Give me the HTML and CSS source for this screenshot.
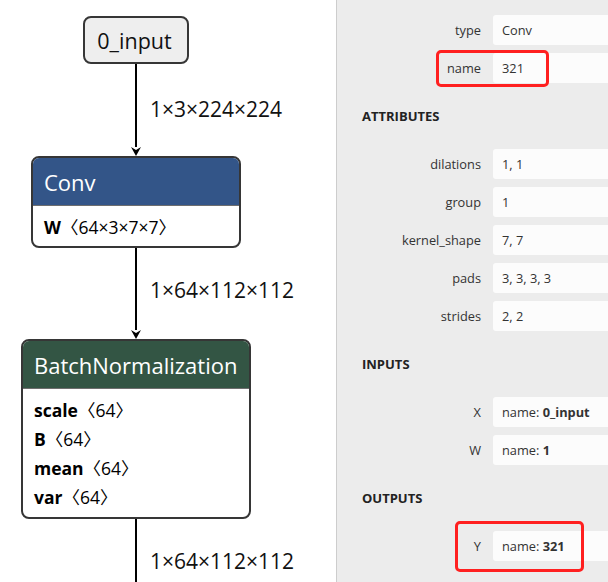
FILE: index.html
```html
<!DOCTYPE html>
<html lang="en">
<head>
<meta charset="utf-8">
<title>Node properties</title>
<link rel="stylesheet" href="styles.css">
</head>
<body>
<div class="app">
  <main class="graph">
    <div class="graph-column">
      <div class="node node--input">0_input</div>

      <div class="edge edge--first">
        <div class="edge-wire">
          <div class="edge-line"></div>
          <svg class="edge-arrow" viewBox="0 0 10 9" width="10" height="9"><polygon points="0,0 5,3 10,0 5,9"/></svg>
        </div>
        <div class="edge-label">1×3×224×224</div>
      </div>

      <div class="node node--op node--conv">
        <div class="node-header node-header--layer">Conv</div>
        <div class="node-body">
          <div class="node-attr"><b>W</b>〈64×3×7×7〉</div>
        </div>
      </div>

      <div class="edge">
        <div class="edge-wire">
          <div class="edge-line"></div>
          <svg class="edge-arrow" viewBox="0 0 10 9" width="10" height="9"><polygon points="0,0 5,3 10,0 5,9"/></svg>
        </div>
        <div class="edge-label">1×64×112×112</div>
      </div>

      <div class="node node--op node--bn">
        <div class="node-header node-header--norm">BatchNormalization</div>
        <div class="node-body">
          <div class="node-attr"><b>scale</b>〈64〉</div>
          <div class="node-attr"><b>B</b>〈64〉</div>
          <div class="node-attr"><b>mean</b>〈64〉</div>
          <div class="node-attr"><b>var</b>〈64〉</div>
        </div>
      </div>

      <div class="edge edge--last">
        <div class="edge-wire">
          <div class="edge-line"></div>
        </div>
        <div class="edge-label">1×64×112×112</div>
      </div>
    </div>
  </main>

  <aside class="sidebar">
    <div class="prop-list">
      <div class="prop"><div class="prop-name">type</div><div class="prop-value">Conv</div></div>
      <div class="prop"><div class="prop-name">name</div><div class="prop-value">321</div><div class="highlight highlight--name"></div></div>
    </div>

    <div class="section-title">Attributes</div>
    <div class="prop-list">
      <div class="prop"><div class="prop-name">dilations</div><div class="prop-value">1, 1</div></div>
      <div class="prop"><div class="prop-name">group</div><div class="prop-value">1</div></div>
      <div class="prop"><div class="prop-name">kernel_shape</div><div class="prop-value">7, 7</div></div>
      <div class="prop"><div class="prop-name">pads</div><div class="prop-value">3, 3, 3, 3</div></div>
      <div class="prop"><div class="prop-name">strides</div><div class="prop-value">2, 2</div></div>
    </div>

    <div class="section-title">Inputs</div>
    <div class="prop-list">
      <div class="prop"><div class="prop-name">X</div><div class="prop-value">name: <b>0_input</b></div></div>
      <div class="prop"><div class="prop-name">W</div><div class="prop-value">name: <b>1</b></div></div>
    </div>

    <div class="section-title">Outputs</div>
    <div class="prop-list">
      <div class="prop"><div class="prop-name">Y</div><div class="prop-value">name: <b>321</b></div><div class="highlight highlight--output"></div></div>
    </div>
  </aside>
</div>
</body>
</html>
```
FILE: styles.css
```css
html, body {
  margin: 0;
  padding: 0;
}

body {
  font-family: "Open Sans", "Noto Sans", "Noto Sans CJK SC", sans-serif;
  color: #000;
  background: #fff;
}

.app {
  display: flex;
  width: 608px;
  height: 582px;
  overflow: hidden;
}

/* ---------- graph ---------- */
.graph {
  flex: none;
  width: 336px;
  height: 582px;
  background: #fff;
  overflow: hidden;
}

.graph-column {
  width: 272px;
  display: flex;
  flex-direction: column;
  align-items: center;
  padding-top: 16px;
}

.node {
  box-sizing: border-box;
  border: 2px solid #363636;
  border-radius: 8px;
  overflow: hidden;
  background: #fff;
}

.node--input {
  background: #eeeeee;
  font-size: 21.5px;
  line-height: 40px;
  padding: 3px 15px 1px 12px;
  color: #111;
}

.node--conv {
  width: 210px;
}

.node--bn {
  width: 230px;
}

.node--bn .node-body {
  padding-bottom: 5px;
}

.node-header {
  color: #fff;
  font-size: 22px;
  line-height: 46px;
  padding: 1px 11px 0 11px;
  white-space: nowrap;
}

.node-header--layer {
  background: #335588;
}

.node-header--norm {
  background: #335544;
}

.node-body {
  border-top: 1px solid #6e6e6e;
  padding: 7px 11px 4px;
  font-family: "Open Sans", "Noto Sans CJK SC", sans-serif;
  font-size: 17.5px;
  line-height: 29px;
  color: #000;
}

.node-attr b {
  font-weight: 700;
}

.edge {
  align-self: stretch;
  display: grid;
  grid-template-columns: minmax(0, 1fr) 12px minmax(0, 1fr);
  height: 91px;
}

.edge--first {
  height: 92px;
}

.edge--last {
  height: 90px;
}

.edge-wire {
  grid-column: 2;
  display: flex;
  flex-direction: column;
  align-items: center;
}

.edge-line {
  flex: 1;
  width: 2px;
  background: #000;
}

.edge-arrow {
  display: block;
  flex: none;
  fill: #000;
}

.edge-label {
  grid-column: 3;
  padding: 28px 0 0 8px;
  font-size: 21px;
  line-height: 28px;
  white-space: nowrap;
  color: #111;
}

.edge--first .edge-label {
  padding-top: 31px;
}

/* ---------- sidebar ---------- */
.sidebar {
  flex: none;
  width: 420px;
  height: 582px;
  box-sizing: border-box;
  background: #ececec;
  border-left: 1px solid #cdcdcd;
  padding-top: 15px;
  color: #333;
  font-size: 12.8px;
}

.prop-list {
  display: flex;
  flex-direction: column;
  gap: 8px;
}

.prop {
  position: relative;
  display: grid;
  grid-template-columns: 144px 1fr;
  column-gap: 12px;
  height: 30px;
  line-height: 30px;
}

.prop-name {
  text-align: right;
  white-space: nowrap;
  color: #333;
}

.prop-value {
  background: #fcfcfc;
  border-radius: 3px;
  padding-left: 9px;
  white-space: nowrap;
  color: #333;
}

.prop-value b {
  font-weight: 700;
}

.section-title {
  margin: 23px 0;
  padding-left: 25px;
  font-size: 13px;
  line-height: 20px;
  font-weight: 700;
  text-transform: uppercase;
  color: #222;
}

.highlight {
  position: absolute;
  box-sizing: border-box;
  border: 3px solid #ff2020;
  border-radius: 5px;
  pointer-events: none;
}

.highlight--name {
  left: 99px;
  top: -3px;
  width: 113px;
  height: 37px;
}

.highlight--output {
  left: 118px;
  top: -10px;
  width: 129px;
  height: 51px;
}
```
